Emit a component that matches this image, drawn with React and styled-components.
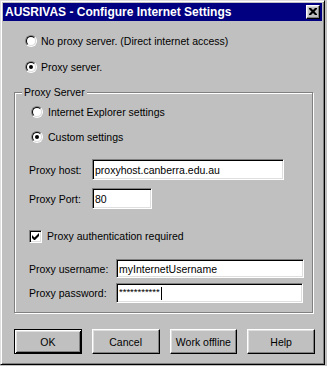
import React from 'react';
import styled, { createGlobalStyle } from 'styled-components';

const GlobalStyle = createGlobalStyle`
  html, body {
    margin: 0;
    padding: 0;
    background: #c0c0c0;
  }
  body {
    font-family: "Liberation Sans", Arial, sans-serif;
    font-size: 10.5px;
    color: #000;
  }
  * { box-sizing: border-box; }
`;

const Window = styled.div`
  width: 325px;
  height: 365px;
  border: 1px solid;
  border-color: #dfdfdf #000 #000 #dfdfdf;
  box-shadow: inset 1px 1px 0 #fff, inset -1px -1px 0 #808080;
  padding: 2px;
  background: #c0c0c0;
  display: flex;
  flex-direction: column;
`;

const TitleBar = styled.div`
  height: 18px;
  background: #000080;
  display: flex;
  align-items: center;
  justify-content: space-between;
  padding: 0 2px 0 2px;
`;

const Title = styled.span`
  color: #fff;
  font-size: 12px;
  font-weight: bold;
  line-height: 1;
`;

const CloseBtn = styled.div`
  width: 14px;
  height: 14px;
  margin-bottom: 1px;
  background: #c0c0c0;
  border: 1px solid;
  border-color: #fff #000 #000 #fff;
  box-shadow: inset -1px -1px 0 #808080, inset 1px 1px 0 #dfdfdf;
  display: flex;
  align-items: center;
  justify-content: center;
`;

const Body = styled.div`
  padding: 12px 7px 0 11px;
  display: flex;
  flex-direction: column;
`;

const Row = styled.div`
  display: flex;
  align-items: center;
  height: ${p => p.$h ?? 16}px;
  margin-top: ${p => p.$mt ?? 0}px;
  padding-left: ${p => p.$pl ?? 0}px;
  gap: ${p => p.$gap ?? 4}px;
  white-space: nowrap;
`;

const RadioDot = styled.span`
  position: relative;
  display: inline-block;
  width: 12px;
  height: 12px;
  border-radius: 50%;
  border: 1px solid;
  border-color: #808080 #fff #fff #808080;
  flex: none;
  &::before {
    content: '';
    position: absolute;
    inset: 0;
    border-radius: 50%;
    border: 1px solid;
    border-color: #000 #dfdfdf #dfdfdf #000;
    background: #fff;
  }
  &::after {
    content: '';
    display: ${p => (p.$checked ? 'block' : 'none')};
    position: absolute;
    left: 3px;
    top: 3px;
    width: 4px;
    height: 4px;
    border-radius: 50%;
    background: #000;
  }
`;

const Group = styled.div`
  position: relative;
  width: 299px;
  margin-top: 17px;
  border: 1px solid #808080;
  box-shadow: inset 1px 1px 0 #fff, 1px 1px 0 #fff;
  padding: 11px 0 9px 14px;
  display: flex;
  flex-direction: column;
`;

const GroupLabel = styled.span`
  position: absolute;
  top: -7px;
  left: 7px;
  padding: 0 2px;
  background: #c0c0c0;
  line-height: 13px;
`;

const FieldLabel = styled.span`
  width: ${p => p.$w}px;
  flex: none;
`;

const TextBox = styled.div`
  width: ${p => p.$w}px;
  height: 100%;
  background: #fff;
  border: 1px solid;
  border-color: #808080 #fff #fff #808080;
  box-shadow: inset 1px 1px 0 #000, inset -1px -1px 0 #dfdfdf;
  padding-left: 2px;
  display: flex;
  align-items: center;
  white-space: nowrap;
  overflow: hidden;
`;

const Stars = styled.span`
  font-size: 9.5px;
  line-height: 1;
  margin-top: -2px;
`;

const Caret = styled.span`
  display: inline-block;
  width: 1px;
  height: 13px;
  background: #000;
  margin-left: 1px;
`;

const CheckBox = styled.span`
  width: 13px;
  height: 13px;
  flex: none;
  background: #fff;
  border: 1px solid;
  border-color: #808080 #fff #fff #808080;
  box-shadow: inset 1px 1px 0 #000, inset -1px -1px 0 #dfdfdf;
  display: flex;
  align-items: center;
  justify-content: center;
`;

const ButtonRow = styled.div`
  display: grid;
  grid-template-columns: repeat(4, 1fr);
  column-gap: 10px;
  margin-top: 16px;
`;

const Button = styled.div`
  height: 25px;
  display: flex;
  align-items: center;
  justify-content: center;
  border: 1px solid;
  border-color: ${p => (p.$primary ? '#000' : '#fff #000 #000 #fff')};
  box-shadow: ${p =>
    p.$primary
      ? 'inset 1px 1px 0 #fff, inset -1px -1px 0 #000, inset 2px 2px 0 #dfdfdf, inset -2px -2px 0 #808080'
      : 'inset -1px -1px 0 #808080, inset 1px 1px 0 #dfdfdf'};
`;

const Radio = ({ checked, label, mt, pl, gap }) => (
  <Row $mt={mt} $pl={pl} $gap={gap}>
    <RadioDot $checked={checked} />
    <span>{label}</span>
  </Row>
);

const Field = ({ label, lw, w, h, mt, children }) => (
  <Row $h={h} $mt={mt} $gap={0}>
    <FieldLabel $w={lw}>{label}</FieldLabel>
    <TextBox $w={w}>{children}</TextBox>
  </Row>
);

export default function App() {
  return (
    <Window>
      <GlobalStyle />
      <TitleBar>
        <Title>AUSRIVAS - Configure Internet Settings</Title>
        <CloseBtn>
          <svg width="8" height="7" viewBox="0 0 8 7">
            <path d="M0 0h2l2 2 2-2h2v1l-2.5 2.5L8 6v1H6L4 5 2 7H0V6l2.5-2.5L0 1z" fill="#000" />
          </svg>
        </CloseBtn>
      </TitleBar>
      <Body>
        <Radio pl={11} gap={4} label="No proxy server. (Direct internet access)" />
        <Radio pl={11} gap={4} mt={10} checked label="Proxy server." />
        <Group>
          <GroupLabel>Proxy Server</GroupLabel>
          <Radio pl={2} gap={5} label="Internet Explorer settings" />
          <Radio pl={2} gap={5} mt={9} checked label="Custom settings" />
          <Field label="Proxy host:" lw={63} w={192} h={21} mt={14}>proxyhost.canberra.edu.au</Field>
          <Field label="Proxy Port:" lw={63} w={60} h={21} mt={8}>80</Field>
          <Row $mt={19} $gap={5}>
            <CheckBox>
              <svg width="7" height="7" viewBox="0 0 7 7">
                <path d="M0 2v3l2 2h1l4-4V0L2.5 4.5z" fill="#000" />
              </svg>
            </CheckBox>
            <span>Proxy authentication required</span>
          </Row>
          <Field label="Proxy username:" lw={87} w={188} h={19} mt={15}>myInternetUsername</Field>
          <Field label="Proxy password:" lw={87} w={187} h={20} mt={5}>
            <Stars>***********</Stars>
            <Caret />
          </Field>
        </Group>
        <ButtonRow>
          <Button $primary>OK</Button>
          <Button>Cancel</Button>
          <Button>Work offline</Button>
          <Button>Help</Button>
        </ButtonRow>
      </Body>
    </Window>
  );
}
